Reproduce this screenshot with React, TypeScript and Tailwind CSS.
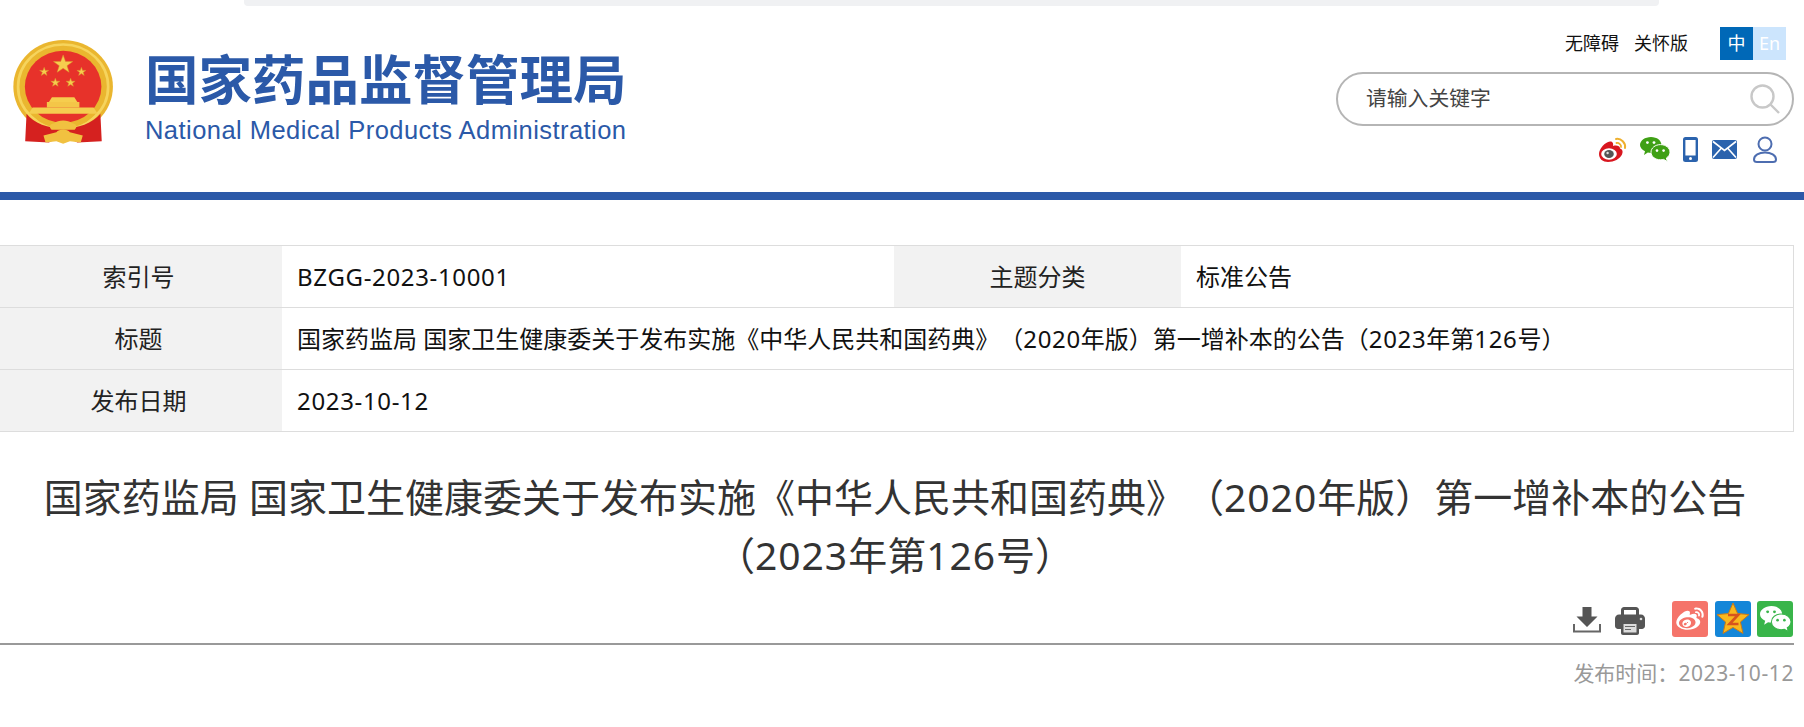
import { RiWeiboFill } from 'react-icons/ri';

function Emblem() {
  const star = (cx: number, cy: number, r: number) => {
    const pts: string[] = [];
    for (let i = 0; i < 10; i++) {
      const rad = i % 2 === 0 ? r : r * 0.4;
      const a = (Math.PI / 5) * i - Math.PI / 2;
      pts.push(`${cx + rad * Math.cos(a)},${cy + rad * Math.sin(a)}`);
    }
    return <polygon points={pts.join(' ')} fill="#f6cd4e" stroke="#d9962a" strokeWidth="1.5" />;
  };
  return (
    <svg viewBox="0 0 310 330" preserveAspectRatio="none" className="h-[105px] w-[105px]">
      <circle cx="148" cy="147" r="147" fill="#eab62f" />
      <circle cx="148" cy="147" r="133" fill="none" stroke="#f6d45c" strokeWidth="8" />
      <circle cx="148" cy="147" r="113" fill="#e7322a" />
      {star(148, 77, 30)}
      {star(92, 100, 14)}
      {star(202, 100, 14)}
      {star(125, 134, 14)}
      {star(170, 134, 14)}
      <path d="M115 180 L181 180 L190 195 L106 195 Z" fill="#f6cd4e" />
      <path d="M100 195 H196 V212 H100 Z" fill="#f4c648" />
      <path d="M58 212 H238 L250 232 H46 Z" fill="#f5cd50" />
      <path d="M40 232 C60 262 105 278 148 278 C191 278 236 262 258 232 L262 318 L190 322 L148 300 L106 322 L36 318 Z" fill="#d5211f" />
      <path d="M66 238 C88 264 118 272 148 272 C178 272 208 264 232 238" fill="none" stroke="#eab62f" strokeWidth="9" />
      <path d="M122 262 C132 250 164 250 174 262 C186 262 192 274 182 282 L114 282 C104 274 110 262 122 262 Z" fill="#f1c140" />
      <path d="M90 300 L128 290 C136 278 160 278 168 290 L206 300 L200 322 L168 318 L148 326 L128 318 L96 322 Z" fill="#f1c140" />
    </svg>
  );
}

function ColorWeibo() {
  return (
    <svg viewBox="0 0 30 26" className="h-[26px] w-[30px]">
      <path d="M2 17 C2 12 8 5 13 4.5 C16 4.2 16.5 7 16 9 C19 8 23 8.5 23 11.5 C26 12.5 26 15 25 17.5 C23 22 17 25 11 25 C6 25 2 22 2 17 Z" fill="#d8161f" />
      <ellipse cx="12" cy="17" rx="7.8" ry="5.8" fill="#fff" />
      <ellipse cx="12" cy="17" rx="4.8" ry="4" fill="#555" />
      <circle cx="10.6" cy="16" r="1.2" fill="#ddd" />
      <path d="M19 2 C24 1 29 6 28 11" fill="none" stroke="#eeb02f" strokeWidth="2" strokeLinecap="round" />
      <path d="M19.5 6 C22 5.5 24.5 8 24 10" fill="none" stroke="#eeb02f" strokeWidth="1.8" strokeLinecap="round" />
    </svg>
  );
}

// two chat bubbles, used in the header and on the share button
function Bubbles({ fg, eye, className }: { fg: string; eye: string; className: string }) {
  return (
    <svg viewBox="0 0 30 25" className={className}>
      <path d="M11 0 C17 0 21.5 3.6 21.5 8 C21.5 12.4 17 16 11 16 C9.8 16 8.8 15.8 7.8 15.6 L4 18 L5 14.2 C2 12.8 0 10.5 0 8 C0 3.6 5 0 11 0 Z" fill={fg} />
      <circle cx="7.4" cy="5.6" r="1.4" fill={eye} />
      <circle cx="14" cy="5.6" r="1.4" fill={eye} />
      <path d="M20.5 7.6 C25.8 7.6 30 11 30 15.2 C30 17.6 28.6 19.6 26.4 21 L27.4 24.6 L23.6 22.4 C22.6 22.7 21.6 22.8 20.5 22.8 C15.2 22.8 11 19.4 11 15.2 C11 11 15.2 7.6 20.5 7.6 Z" fill={fg} stroke={eye} strokeWidth="1" />
      <circle cx="17" cy="13.6" r="1.3" fill={eye} />
      <circle cx="23.6" cy="13.6" r="1.3" fill={eye} />
    </svg>
  );
}

function Person() {
  return (
    <svg viewBox="0 0 24 27" className="h-[27px] w-[24px]" fill="none" stroke="#4d6db0" strokeWidth="2">
      <circle cx="12" cy="8" r="6.5" />
      <path d="M4 26 H20 C22 26 23 25 23 23.5 C23 19 18 16.5 12 16.5 C6 16.5 1 19 1 23.5 C1 25 2 26 4 26 Z" />
    </svg>
  );
}

function Download() {
  return (
    <svg viewBox="0 0 28 26" className="h-[26px] w-[28px]">
      <path d="M9.5 0 H18.5 V9.5 H24.5 L14 20 L3.5 9.5 H9.5 Z" fill="#555555" />
      <path d="M1 17 V24.6 H27 V17" fill="none" stroke="#666666" strokeWidth="2" />
    </svg>
  );
}

function Printer() {
  return (
    <svg viewBox="0 0 30 28" className="h-[28px] w-[30px]">
      <path d="M6 8 V3 C6 1.4 7.4 0 9 0 H21 C22.6 0 24 1.4 24 3 V8 H21 V3 H9 V8 Z" fill="#555555" />
      <path d="M4 7.5 H26 C28.2 7.5 30 9.3 30 11.5 V19 C30 20.6 28.6 22 27 22 H24 V26 C24 27.2 23.2 28 22 28 H8 C6.8 28 6 27.2 6 26 V22 H3 C1.4 22 0 20.6 0 19 V11.5 C0 9.3 1.8 7.5 4 7.5 Z" fill="#555555" />
      <rect x="8.5" y="17" width="13" height="8.5" fill="#dcdcdc" />
      <path d="M10 19.5 H20 M10 22.5 H16" stroke="#666666" strokeWidth="1.2" />
      <circle cx="26" cy="12" r="1.3" fill="#dcdcdc" />
    </svg>
  );
}

function ShareQQ() {
  return (
    <div className="flex h-[36px] w-[36px] items-center justify-center rounded-[3px] bg-[#1486d8]">
      <svg viewBox="0 0 36 36" className="h-[36px] w-[36px]">
        <polygon points="18,2 22.6,12.6 34,13.6 25.4,21 28,32.4 18,26.4 8,32.4 10.6,21 2,13.6 13.4,12.6" fill="#f9b81e" stroke="#c97c16" strokeWidth="1" />
        <path d="M13 14 H23 L14.5 23 H23.5" fill="none" stroke="#d8541c" strokeWidth="2.6" />
      </svg>
    </div>
  );
}

// YaHei digits run wider than Noto's, so the numbers get a little tracking
function TitleMain({ t }: { t: string }) {
  return (
    <>
      国家药监局 国家卫生健康委关于发布实施《中华人民共和国药典》（<span className={t}>2020</span>年版）第一增补本的公告
    </>
  );
}

function TitleNo({ t }: { t: string }) {
  return (
    <>
      （<span className={t}>2023</span>年第<span className={t}>126</span>号）
    </>
  );
}

const th = 'border-y border-[#dddddd] bg-[#f2f2f2] text-center font-normal text-[24px] text-[#222222]';
const thFirst = 'border-y border-[#dddddd] bg-[#f2f2f2] pr-[5px] text-center font-normal text-[24px] text-[#222222]';
const td = 'border-y border-[#dddddd] pl-[15px] text-left text-[24px] text-[#111111]';

export default function App() {
  return (
    <div className="h-[727px] w-[1804px] overflow-hidden bg-white font-['Noto_Sans','Noto_Sans_CJK_SC',sans-serif] [text-spacing-trim:space-all]">
      {/* top strip */}
      <div className="ml-[244px] h-[6px] w-[1415px] rounded-b-[4px] bg-[#f0f1f3]" />

      {/* header */}
      <header className="flex h-[186px] justify-between">
        <div className="flex">
          <div className="ml-[13px] mt-[34px]">
            <Emblem />
          </div>
          <div className="ml-[27px] mt-[39px] flex flex-col text-[#2b59a8]">
            <span className="whitespace-nowrap text-[53.5px] font-bold leading-[70px]">国家药品监督管理局</span>
            <span className="whitespace-nowrap font-['Liberation_Sans',sans-serif] text-[25.5px] leading-[30px] tracking-[0.45px]">
              National Medical Products Administration
            </span>
          </div>
        </div>
        <div className="flex w-[468px] flex-col items-end pr-[10px]">
          <div className="mt-[21px] flex h-[33px] items-center pr-[8px] text-[18px] text-[#111111]">
            <span>无障碍</span>
            <span className="ml-[15px]">关怀版</span>
            <span className="ml-[32px] flex h-[33px] w-[33px] items-center justify-center bg-[#0068b7] text-white">中</span>
            <span className="flex h-[33px] w-[33px] items-center justify-center bg-[#cce5fd] text-white">En</span>
          </div>
          <div className="mt-[12px] flex h-[54px] w-[458px] items-center justify-between rounded-full border-2 border-[#b5b5b5] pl-[28px] pr-[12px]">
            <span className="text-[20.8px] text-[#444444]">请输入关键字</span>
            <svg viewBox="0 0 30 30" className="h-[30px] w-[30px]" fill="none" stroke="#c8c8c8" strokeWidth="2.4">
              <circle cx="12.5" cy="12.5" r="11" />
              <path d="M20.5 20.5 L29 29" />
            </svg>
          </div>
          <div className="mr-[17px] mt-[10px] flex items-center">
            <ColorWeibo />
            <Bubbles fg="#3fa015" eye="#ffffff" className="ml-[13px] h-[25px] w-[30px]" />
            <svg viewBox="0 0 15 25" className="ml-[13px] h-[25px] w-[15px]">
              <rect width="15" height="25" rx="2.5" fill="#2b63ad" />
              <rect x="2.4" y="3" width="10.2" height="15.5" fill="#fff" />
              <circle cx="7.5" cy="21.6" r="1.5" fill="#fff" />
            </svg>
            <svg viewBox="0 0 25 19" className="ml-[14px] h-[19px] w-[25px]">
              <rect width="25" height="19" rx="2" fill="#2b63ad" />
              <path d="M1 1.5 L12.5 10.5 L24 1.5 M1 17.5 L9 8.5 M24 17.5 L16 8.5" fill="none" stroke="#fff" strokeWidth="1.6" />
            </svg>
            <div className="ml-[16px]">
              <Person />
            </div>
          </div>
        </div>
      </header>

      {/* blue bar */}
      <div className="h-[8px] bg-[#2b59a8]" />

      <main className="w-[1794px]">
        <table className="mt-[45px] w-full table-fixed border-collapse border-r border-[#dddddd]">
          <colgroup>
            <col className="w-[282px]" />
            <col className="w-[612px]" />
            <col className="w-[287px]" />
            <col />
          </colgroup>
          <tbody>
            <tr className="h-[62px]">
              <th className={thFirst}>索引号</th>
              <td className={td}>
                <span className="tracking-[0.65px]">BZGG-2023-10001</span>
              </td>
              <th className={th}>主题分类</th>
              <td className={td}>标准公告</td>
            </tr>
            <tr className="h-[62px]">
              <th className={thFirst}>标题</th>
              <td className={td} colSpan={3}>
                <TitleMain t="tracking-[0.65px]" />
                <TitleNo t="tracking-[0.65px]" />
              </td>
            </tr>
            <tr className="h-[62px]">
              <th className={thFirst}>发布日期</th>
              <td className={td} colSpan={3}>
                <span className="tracking-[0.65px]">2023-10-12</span>
              </td>
            </tr>
          </tbody>
        </table>

        <h1 className="ml-[35px] mt-[36px] w-[1720px] text-center text-[39px] font-normal leading-[58px] text-[#333333]">
          <span className="block">
            <TitleMain t="tracking-[1px]" />
          </span>
          <span className="block">
            <TitleNo t="tracking-[1px]" />
          </span>
        </h1>

        {/* tools */}
        <div className="mt-[17px] flex h-[42px] items-start justify-end pr-[1px]">
          <div className="mt-[6px]">
            <Download />
          </div>
          <div className="ml-[14px] mt-[6px]">
            <Printer />
          </div>
          <div className="ml-[27px] flex h-[36px] w-[36px] items-center justify-center rounded-[3px] bg-[#f5746a]">
            <RiWeiboFill className="h-[30px] w-[30px] text-white" />
          </div>
          <div className="ml-[7px]">
            <ShareQQ />
          </div>
          <div className="ml-[6px] flex h-[36px] w-[36px] items-center justify-center rounded-[3px] bg-[#39b54a]">
            <Bubbles fg="#ffffff" eye="#39b54a" className="h-[26px] w-[31px]" />
          </div>
        </div>
        <div className="h-[2px] bg-[#999999]" />
        <p className="mt-[14px] text-right text-[21px] leading-[28px] text-[#999999]">
          发布时间：<span className="tracking-[0.6px]">2023-10-12</span>
        </p>
      </main>
    </div>
  );
}
